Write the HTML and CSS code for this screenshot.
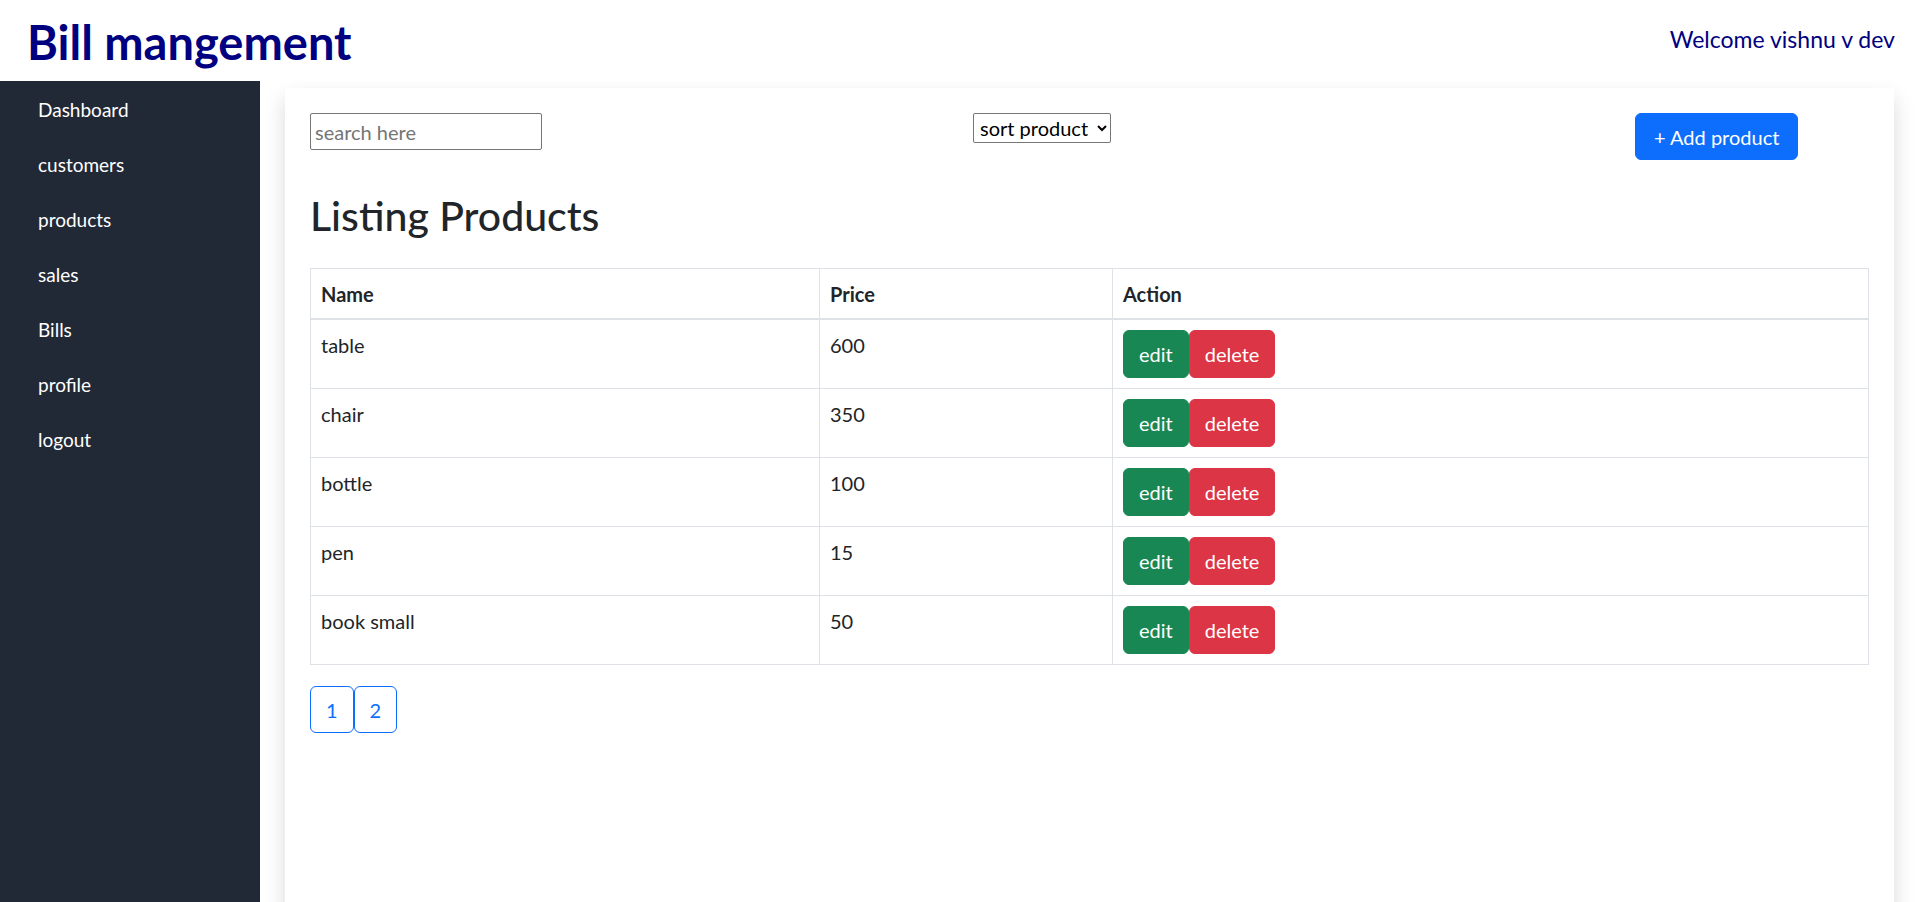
FILE: index.html
```html
<!DOCTYPE html>
<html lang="en">
<head>
<meta charset="utf-8">
<title>Bill mangement</title>
<link rel="stylesheet" href="styles.css">
</head>
<body>
<header class="topbar">
  <h1 class="brand">Bill mangement</h1>
  <div class="welcome">Welcome vishnu v dev</div>
</header>
<div class="layout">
  <nav class="sidebar">
    <a class="nav-link" href="#">Dashboard</a>
    <a class="nav-link" href="#">customers</a>
    <a class="nav-link" href="#">products</a>
    <a class="nav-link" href="#">sales</a>
    <a class="nav-link" href="#">Bills</a>
    <a class="nav-link" href="#">profile</a>
    <a class="nav-link" href="#">logout</a>
  </nav>
  <main class="main">
    <section class="card">
      <div class="toolbar">
        <input class="search" type="text" placeholder="search here">
        <select class="sort">
          <option>sort product</option>
        </select>
        <button class="btn btn-primary">+ Add product</button>
      </div>
      <h2 class="title">Listing Products</h2>
      <table class="table">
        <colgroup>
          <col class="c-name">
          <col class="c-price">
          <col class="c-action">
        </colgroup>
        <thead>
          <tr><th>Name</th><th>Price</th><th>Action</th></tr>
        </thead>
        <tbody>
          <tr><td>table</td><td>600</td><td><button class="btn btn-sm btn-success">edit</button><button class="btn btn-sm btn-danger">delete</button></td></tr>
          <tr><td>chair</td><td>350</td><td><button class="btn btn-sm btn-success">edit</button><button class="btn btn-sm btn-danger">delete</button></td></tr>
          <tr><td>bottle</td><td>100</td><td><button class="btn btn-sm btn-success">edit</button><button class="btn btn-sm btn-danger">delete</button></td></tr>
          <tr><td>pen</td><td>15</td><td><button class="btn btn-sm btn-success">edit</button><button class="btn btn-sm btn-danger">delete</button></td></tr>
          <tr><td>book small</td><td>50</td><td><button class="btn btn-sm btn-success">edit</button><button class="btn btn-sm btn-danger">delete</button></td></tr>
        </tbody>
      </table>
      <div class="pager"><button class="btn btn-outline">1</button><button class="btn btn-outline">2</button></div>
    </section>
  </main>
</div>
</body>
</html>
```

FILE: styles.css
```css
* { box-sizing: border-box; }
html, body { margin: 0; padding: 0; }
body {
  font-family: Lato, "Open Sans", sans-serif;
  font-size: 20px;
  line-height: 1.5;
  color: #212529;
  background: #fff;
  overflow: hidden;
}
.topbar {
  height: 81px;
  display: flex;
  align-items: center;
  justify-content: space-between;
  padding: 0 25px 0 27px;
}
.brand {
  margin: 0;
  font-size: 47px;
  font-weight: 700;
  line-height: 1.2;
  color: #000080;
  position: relative;
  top: 2px;
}
.welcome {
  font-size: 23px;
  color: #000080;
  position: relative;
  top: -1px;
}
.layout {
  display: flex;
  height: calc(100vh - 81px);
  overflow: hidden;
}
.sidebar {
  width: 260px;
  flex: 0 0 260px;
  background: #222936;
  padding-top: 1px;
  display: flex;
  flex-direction: column;
}
.nav-link {
  color: #fff;
  text-decoration: none;
  font-size: 19px;
  line-height: 30px;
  padding: 12.5px 38px;
}
.main {
  flex: 1;
  padding: 7px 26px 0 25px;
}
.card {
  background: #fff;
  min-height: 900px;
  padding: 25px;
  box-shadow: 0 10px 20px rgba(0,0,0,.15);
}
.toolbar {
  display: grid;
  grid-template-columns: 663px 662px auto;
  align-items: start;
}
.search {
  width: 232px;
  height: 37px;
  font-family: inherit;
  font-size: 20px;
  padding: 1px 4px;
  border: 1px solid #767676;
  border-radius: 2px;
  color: #212529;
}
.search::placeholder { color: #757575; }
.sort {
  justify-self: start;
  width: 138px;
  height: 30px;
  font-family: inherit;
  font-size: 20px;
  border: 1px solid #767676;
  border-radius: 2px;
  background: #fff;
  color: #000;
  padding: 0 2px;
}
.btn {
  display: inline-block;
  font-family: inherit;
  font-size: 20px;
  line-height: 30px;
  padding: 7.5px 15px;
  border: 1px solid transparent;
  border-radius: 6px;
  color: #fff;
  cursor: pointer;
  vertical-align: top;
}
.btn-sm { padding-top: 8px; padding-bottom: 8px; }
.btn-primary { background: #0d6efd; border-color: #0d6efd; justify-self: start; padding-left: 18px; padding-right: 18px; }
.btn-success { background: #198754; border-color: #198754; }
.btn-danger { background: #dc3545; border-color: #dc3545; }
.btn-outline { background: #fff; border-color: #0d6efd; color: #0d6efd; }
.title {
  font-size: 41px;
  font-weight: 500;
  line-height: 1.2;
  margin: 31px 0 28px;
}
.table {
  width: 100%;
  border-collapse: collapse;
  border: 1px solid #dee2e6;
}
.c-name { width: 509px; }
.c-price { width: 293px; }
.table th, .table td {
  border: 1px solid #dee2e6;
  padding: 10px;
  text-align: left;
  vertical-align: top;
}
.table th { font-weight: 700; padding-bottom: 9px; }
.table thead th { border-bottom: 2px solid #dee2e6; }
.pager {
  margin-top: 21px;
  display: flex;
}
```
